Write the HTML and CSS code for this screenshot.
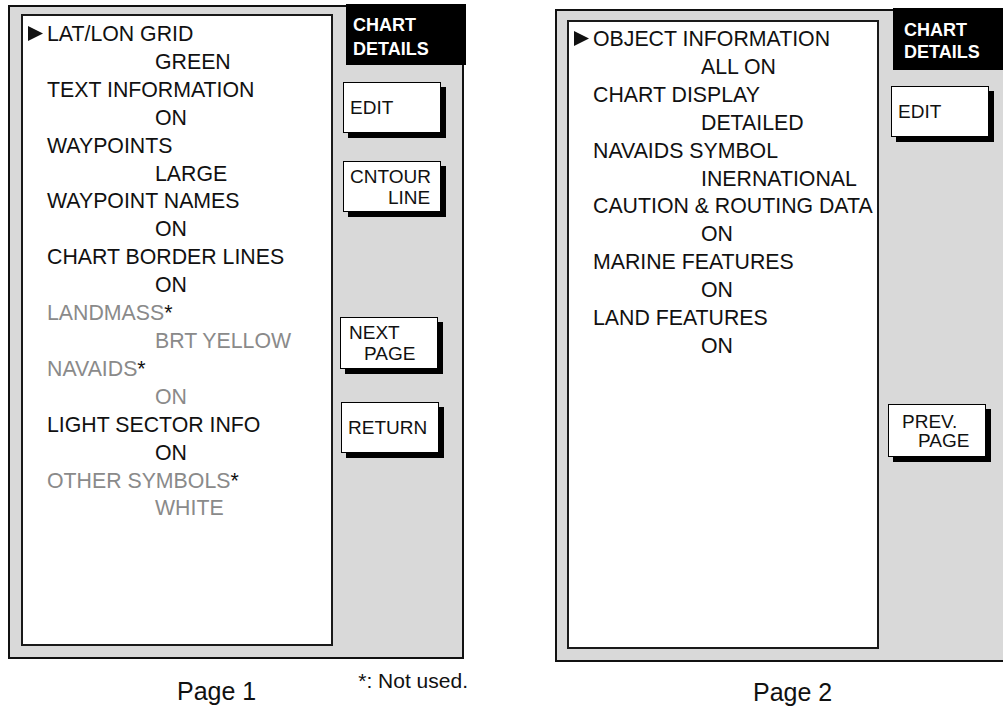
FILE: index.html
```html
<!DOCTYPE html>
<html lang="en">

<head>
    <meta charset="UTF-8">
    <meta name="viewport" content="width=device-width, initial-scale=1.0">
    <title>Chart Details</title>
    <link rel="stylesheet" href="styles.css">
</head>

<body>
    <div class="sheet">
        <!-- page 1 -->
        <section class="page page-1">
            <div class="frame">
                <div class="panel">
                    <div class="row label sel"><svg class="cursor" width="15" height="15" viewBox="0 0 15 15"><path d="M0 0L15 7.5L0 15Z" /></svg>LAT/LON GRID</div>
                    <div class="row value">GREEN</div>
                    <div class="row label">TEXT INFORMATION</div>
                    <div class="row value">ON</div>
                    <div class="row label">WAYPOINTS</div>
                    <div class="row value">LARGE</div>
                    <div class="row label">WAYPOINT NAMES</div>
                    <div class="row value">ON</div>
                    <div class="row label">CHART BORDER LINES</div>
                    <div class="row value">ON</div>
                    <div class="row label off">LANDMASS<span class="star">*</span></div>
                    <div class="row value off">BRT YELLOW</div>
                    <div class="row label off">NAVAIDS<span class="star">*</span></div>
                    <div class="row value off">ON</div>
                    <div class="row label">LIGHT SECTOR INFO</div>
                    <div class="row value">ON</div>
                    <div class="row label off">OTHER SYMBOLS<span class="star">*</span></div>
                    <div class="row value off">WHITE</div>
                </div>
                <div class="side">
                    <div class="title">CHART<br>DETAILS</div>
                    <div class="btn btn-edit"><span>EDIT</span></div>
                    <div class="btn btn-cntour"><span>CNTOUR</span><span class="l2">LINE</span></div>
                    <div class="btn btn-next"><span>NEXT</span><span class="l2">PAGE</span></div>
                    <div class="btn btn-return"><span>RETURN</span></div>
                </div>
            </div>
            <div class="caption">
                <span class="page-no">Page 1</span>
                <span class="note">*: Not used.</span>
            </div>
        </section>

        <!-- page 2 -->
        <section class="page page-2">
            <div class="frame">
                <div class="panel">
                    <div class="row label sel"><svg class="cursor" width="15" height="15" viewBox="0 0 15 15"><path d="M0 0L15 7.5L0 15Z" /></svg>OBJECT INFORMATION</div>
                    <div class="row value">ALL ON</div>
                    <div class="row label">CHART DISPLAY</div>
                    <div class="row value">DETAILED</div>
                    <div class="row label">NAVAIDS SYMBOL</div>
                    <div class="row value">INERNATIONAL</div>
                    <div class="row label">CAUTION &amp; ROUTING DATA</div>
                    <div class="row value">ON</div>
                    <div class="row label">MARINE FEATURES</div>
                    <div class="row value">ON</div>
                    <div class="row label">LAND FEATURES</div>
                    <div class="row value">ON</div>
                </div>
                <div class="side">
                    <div class="title">CHART<br>DETAILS</div>
                    <div class="btn btn-edit"><span>EDIT</span></div>
                    <div class="btn btn-prev"><span>PREV.</span><span class="l2">PAGE</span></div>
                </div>
            </div>
            <div class="caption">
                <span class="page-no">Page 2</span>
            </div>
        </section>
    </div>
</body>

</html>
```

FILE: styles.css
```css
body {
    margin: 0px;
    overflow: hidden;
    background: #fff;
    color: #111;
    font-family: "Liberation Sans", Arial, sans-serif;
}

.sheet {
    display: flex;
    align-items: flex-start;
    gap: 91px;
    padding-left: 8px;
}

.page {
    flex: none;
    width: 456px;
}

.page-1 {
    margin-top: 5px;
}

.page-2 {
    margin-top: 9px;
}

/* grey outer frame */
.frame {
    display: flex;
    border: 2px solid #111;
    background: #d9d9d9;
    padding: 7px 0 11px 11px;
}

.page-2 .frame {
    padding: 9px 0 11px 10px;
}

/* white menu list */
.panel {
    flex: none;
    box-sizing: border-box;
    width: 312px;
    height: 632px;
    background: #fff;
    border: 2px solid #1a1a1a;
    padding-top: 5px;
}

.page-2 .panel {
    height: 629px;
    padding-top: 4px;
}

.row {
    font-size: 21.3px;
    line-height: 27.9px;
    white-space: nowrap;
}

.label {
    padding-left: 24px;
}

.label.sel {
    padding-left: 5px;
}

.cursor {
    margin-right: 4px;
    vertical-align: baseline;
    fill: #111;
}

.value {
    padding-left: 132px;
}

.off {
    color: #8a8a8a;
}

.star {
    color: #111;
}

/* right hand soft keys */
.side {
    flex: 1;
    display: flex;
    flex-direction: column;
    align-items: flex-start;
}

/* black tab sits over the frame's top right corner */
.title {
    align-self: stretch;
    box-sizing: border-box;
    height: 61px;
    margin: -10px -4px 0 13px;
    padding: 9px 0 0 7px;
    background: #000;
    color: #fff;
    font-weight: bold;
    font-size: 18px;
    line-height: 24px;
}

.page-2 .title {
    height: 62px;
    margin-top: -12px;
    margin-left: 14px;
    padding-left: 11px;
    line-height: 22px;
    padding-top: 11px;
}

.btn {
    box-sizing: border-box;
    width: 98px;
    height: 51px;
    margin-left: 10px;
    display: flex;
    flex-direction: column;
    justify-content: center;
    padding-left: 6px;
    background: #fff;
    border: 1px solid #000;
    box-shadow: 5px 5px 0 #000;
    font-size: 19px;
    line-height: 21px;
}

.btn .l2 {
    padding-left: 15px;
}

.btn-cntour .l2 {
    padding-left: 38px;
}

.page-1 .btn-edit {
    margin-top: 17px;
}

.btn-cntour {
    margin-top: 28px;
}

.btn-next {
    height: 52px;
    margin-top: 105px;
    margin-left: 7px;
    padding-left: 8px;
}

.btn-return {
    margin-top: 33px;
    margin-left: 8px;
}

.page-2 .btn-edit {
    margin-top: 16px;
    margin-left: 12px;
}

.btn-prev {
    height: 53px;
    margin-top: 267px;
    margin-left: 9px;
    padding-left: 13px;
    line-height: 19px;
}

.btn-prev .l2 {
    padding-left: 16px;
}

/* captions under the frames */
.caption {
    display: flex;
    align-items: flex-start;
    padding-left: 169px;
    white-space: nowrap;
}

.page-2 .caption {
    padding-left: 198px;
}

.page-no {
    flex: none;
    margin-top: 17px;
    font-size: 25px;
    line-height: 30px;
}

.page-2 .page-no {
    margin-top: 15px;
}

.note {
    flex: none;
    margin-top: 10px;
    margin-left: 102px;
    font-size: 21px;
    line-height: 24px;
}
```
